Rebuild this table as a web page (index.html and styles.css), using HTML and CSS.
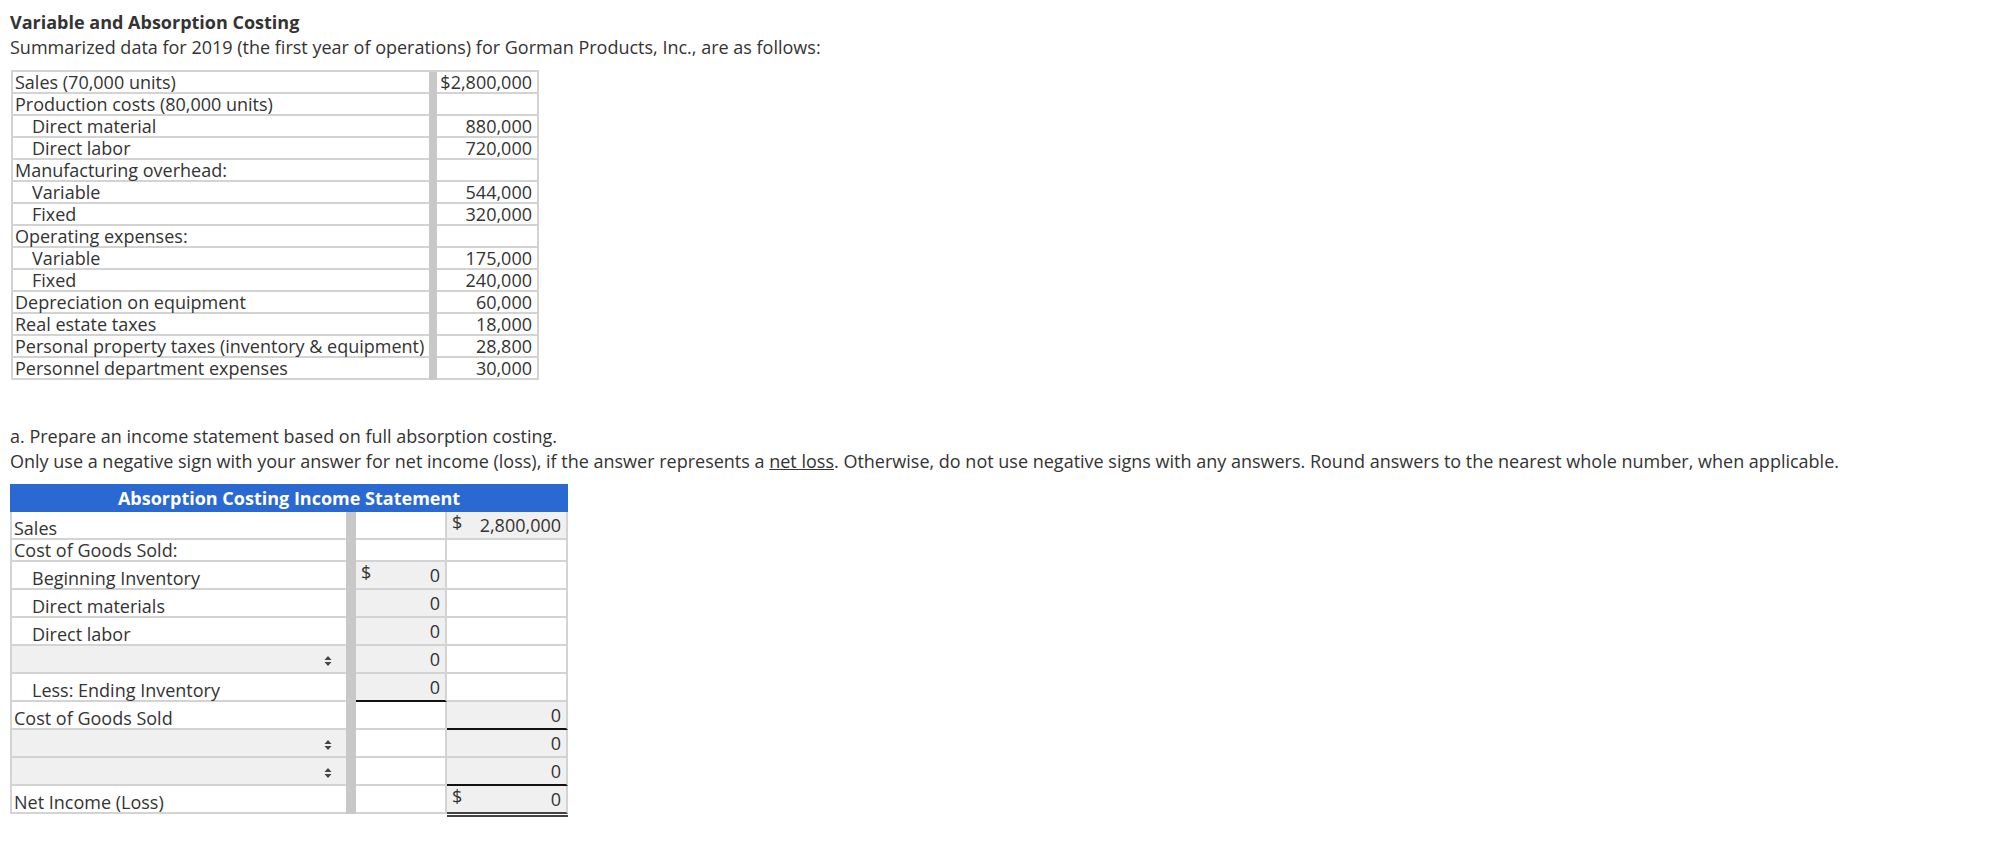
FILE: index.html
```html
<!DOCTYPE html>
<html lang="en">
<head>
<meta charset="UTF-8">
<title>Variable and Absorption Costing</title>
<link rel="stylesheet" href="styles.css">
</head>
<body>

<div class="intro">
    <h3 class="title">Variable and Absorption Costing</h3>
    <p>Summarized data for 2019 (the first year of operations) for Gorman Products, Inc., are as follows:</p>
</div>

<table class="data">
    <colgroup>
        <col class="c-lbl">
        <col class="c-gap">
        <col class="c-val">
    </colgroup>
    <tr><td class="lbl">Sales (70,000 units)</td><td class="gap"></td><td class="val">$2,800,000</td></tr>
    <tr><td class="lbl">Production costs (80,000 units)</td><td class="gap"></td><td class="val"></td></tr>
    <tr><td class="lbl ind">Direct material</td><td class="gap"></td><td class="val">880,000</td></tr>
    <tr><td class="lbl ind">Direct labor</td><td class="gap"></td><td class="val">720,000</td></tr>
    <tr><td class="lbl">Manufacturing overhead:</td><td class="gap"></td><td class="val"></td></tr>
    <tr><td class="lbl ind">Variable</td><td class="gap"></td><td class="val">544,000</td></tr>
    <tr><td class="lbl ind">Fixed</td><td class="gap"></td><td class="val">320,000</td></tr>
    <tr><td class="lbl">Operating expenses:</td><td class="gap"></td><td class="val"></td></tr>
    <tr><td class="lbl ind">Variable</td><td class="gap"></td><td class="val">175,000</td></tr>
    <tr><td class="lbl ind">Fixed</td><td class="gap"></td><td class="val">240,000</td></tr>
    <tr><td class="lbl">Depreciation on equipment</td><td class="gap"></td><td class="val">60,000</td></tr>
    <tr><td class="lbl">Real estate taxes</td><td class="gap"></td><td class="val">18,000</td></tr>
    <tr><td class="lbl">Personal property taxes (inventory &amp; equipment)</td><td class="gap"></td><td class="val">28,800</td></tr>
    <tr><td class="lbl">Personnel department expenses</td><td class="gap"></td><td class="val">30,000</td></tr>
</table>

<div class="question">
    <p>a. Prepare an income statement based on full absorption costing.</p>
    <p>Only use a negative sign with your answer for net income (loss), if the answer represents a <span class="term">net loss</span>. Otherwise, do not use negative signs with any answers. Round answers to the nearest whole number, when applicable.</p>
</div>

<table class="income">
    <colgroup>
        <col class="i-lbl">
        <col class="i-gap">
        <col class="i-mid">
        <col class="i-end">
    </colgroup>
    <tr><th colspan="4">Absorption Costing Income Statement</th></tr>
    <tr class="r-sales">
        <td class="lbl">Sales</td>
        <td class="gap"></td>
        <td class="cell"></td>
        <td class="cell inp"><div class="amt"><span class="cur">$</span><span>2,800,000</span></div></td>
    </tr>
    <tr class="r-short">
        <td class="lbl">Cost of Goods Sold:</td>
        <td class="gap"></td>
        <td class="cell"></td>
        <td class="cell"></td>
    </tr>
    <tr>
        <td class="lbl ind">Beginning Inventory</td>
        <td class="gap"></td>
        <td class="cell inp"><div class="amt"><span class="cur">$</span><span>0</span></div></td>
        <td class="cell"></td>
    </tr>
    <tr>
        <td class="lbl ind">Direct materials</td>
        <td class="gap"></td>
        <td class="cell inp"><div class="amt"><span>0</span></div></td>
        <td class="cell"></td>
    </tr>
    <tr>
        <td class="lbl ind">Direct labor</td>
        <td class="gap"></td>
        <td class="cell inp"><div class="amt"><span>0</span></div></td>
        <td class="cell"></td>
    </tr>
    <tr>
        <td class="lbl pick"><div class="arrow"><svg width="8" height="12" viewBox="0 0 8 12"><polygon points="0.5,5 4,1 7.5,5" fill="#444"/><polygon points="0.5,7 4,11 7.5,7" fill="#444"/></svg></div></td>
        <td class="gap"></td>
        <td class="cell inp"><div class="amt"><span>0</span></div></td>
        <td class="cell"></td>
    </tr>
    <tr>
        <td class="lbl ind">Less: Ending Inventory</td>
        <td class="gap"></td>
        <td class="cell inp total"><div class="amt"><span>0</span></div></td>
        <td class="cell"></td>
    </tr>
    <tr>
        <td class="lbl">Cost of Goods Sold</td>
        <td class="gap"></td>
        <td class="cell"></td>
        <td class="cell inp total"><div class="amt"><span>0</span></div></td>
    </tr>
    <tr>
        <td class="lbl pick"><div class="arrow"><svg width="8" height="12" viewBox="0 0 8 12"><polygon points="0.5,5 4,1 7.5,5" fill="#444"/><polygon points="0.5,7 4,11 7.5,7" fill="#444"/></svg></div></td>
        <td class="gap"></td>
        <td class="cell"></td>
        <td class="cell inp"><div class="amt"><span>0</span></div></td>
    </tr>
    <tr>
        <td class="lbl pick"><div class="arrow"><svg width="8" height="12" viewBox="0 0 8 12"><polygon points="0.5,5 4,1 7.5,5" fill="#444"/><polygon points="0.5,7 4,11 7.5,7" fill="#444"/></svg></div></td>
        <td class="gap"></td>
        <td class="cell"></td>
        <td class="cell inp total"><div class="amt"><span>0</span></div></td>
    </tr>
    <tr>
        <td class="lbl">Net Income (Loss)</td>
        <td class="gap"></td>
        <td class="cell"></td>
        <td class="cell inp grand"><div class="amt"><span class="cur">$</span><span>0</span></div></td>
    </tr>
</table>

</body>
</html>
```

FILE: styles.css
```css
/* Global Styles */
body {
    font-family: "Open Sans", "Liberation Sans", sans-serif;
    font-size: 18px;
    color: #333;
    margin: 0;
    padding: 10px;
    background-color: #fff;
}

p {
    margin: 0;
    line-height: 25px;
}

.title {
    margin: 0;
    font-size: 18px;
    font-weight: bold;
    line-height: 25px;
}

/* Given data table */
.data {
    border-spacing: 0;
    table-layout: fixed;
    width: 528px;
    margin: 10px 0 0 1px;
    border-top: 2px solid #d3d3d3;
    border-left: 2px solid #d3d3d3;
}

.c-lbl { width: 416px; }
.c-gap { width: 8px; }
.c-val { width: 102px; }

.data td {
    padding: 0;
    height: 20px;
    line-height: 20px;
    border-bottom: 2px solid #d3d3d3;
    white-space: nowrap;
}

.data .lbl {
    padding-left: 2px;
}

.data .lbl.ind {
    padding-left: 19px;
}

.data .gap,
.income .gap {
    background-color: #c8c8c8;
    border-bottom: none;
}

.data .val {
    text-align: right;
    padding-right: 5px;
    border-right: 2px solid #d3d3d3;
}

.question {
    margin-top: 44px;
}

.term {
    text-decoration: underline;
}

/* Income statement */
.income {
    border-spacing: 0;
    table-layout: fixed;
    width: 558px;
    margin-top: 10px;
}

.i-lbl { width: 336px; }
.i-gap { width: 10px; }
.i-mid { width: 91px; }
.i-end { width: 121px; }

.income th {
    background-color: #2a69d2;
    color: #fff;
    font-size: 18px;
    font-weight: bold;
    height: 28px;
    line-height: 28px;
    padding: 0;
    text-align: center;
}

.income td {
    padding: 0;
    height: 26px;
    border-bottom: 2px solid #d3d3d3;
    white-space: nowrap;
}

.income .r-sales td {
    height: 25px;
}

.income .r-short td {
    height: 20px;
}

.income .lbl {
    border-left: 2px solid #d3d3d3;
    padding-left: 2px;
    vertical-align: bottom;
    line-height: 20px;
}

.income .lbl.ind {
    padding-left: 20px;
}

.income .lbl.pick {
    background-color: #f0f0f0;
    vertical-align: middle;
}

.arrow {
    display: flex;
    justify-content: flex-end;
    align-items: center;
    padding: 3px 14px 0 0;
}

.arrow svg {
    display: block;
}

.income .cell {
    border-right: 2px solid #d3d3d3;
}

.income .inp {
    background-color: #f0f0f0;
}

.income .total {
    border-bottom-color: #111;
}

.income .grand {
    border-bottom-color: #444;
    box-shadow: 0 1px 0 #fff, 0 3px 0 #444;
}

.amt {
    display: flex;
    justify-content: space-between;
    align-items: center;
    height: 100%;
    min-height: 26px;
    padding: 0 5px 0 5px;
    line-height: 20px;
}

.amt span:only-child {
    margin-left: auto;
}

.amt .cur {
    align-self: flex-start;
    margin-top: 0;
}
```
